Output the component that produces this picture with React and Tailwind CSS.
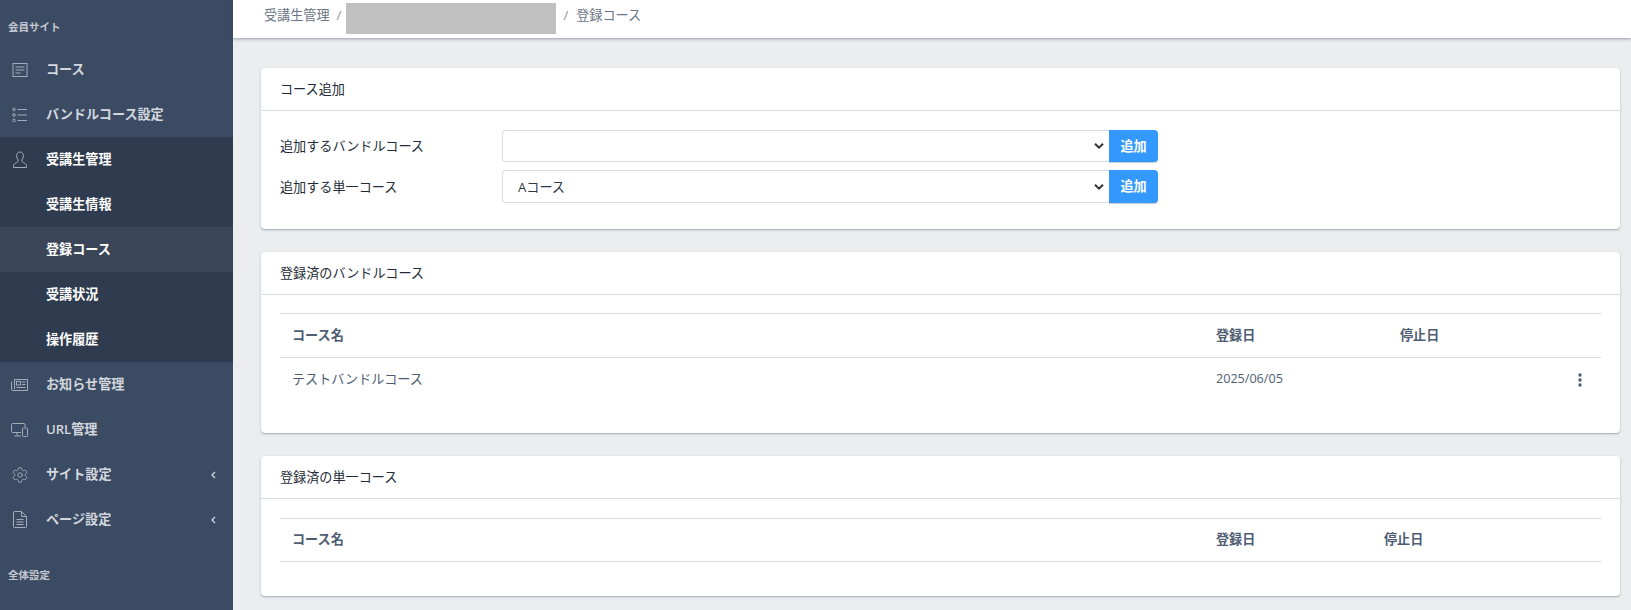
import { Settings } from 'lucide-react'

const FONT = "font-['Open_Sans','Noto_Sans_CJK_JP',sans-serif]"

const IconCourse = () => (
  <svg width="16" height="16" viewBox="0 0 16 16" fill="none" stroke="currentColor" strokeWidth="1">
    <rect x="1" y="1.500" width="14" height="13" />
    <path d="M3.500 5h9M3.500 8h9M3.500 11h5" />
  </svg>
)
const IconList = () => (
  <svg width="16" height="16" viewBox="0 0 16 16" fill="none" stroke="currentColor" strokeWidth="1">
    <circle cx="2" cy="2.500" r="1.300" />
    <circle cx="2" cy="8" r="1.300" />
    <circle cx="2" cy="13.500" r="1.300" />
    <path d="M5.500 2.500H15M5.500 8H15M5.500 13.500H15" />
  </svg>
)
const IconUser = () => (
  <svg width="16" height="18" viewBox="0 0 16 18" fill="none" stroke="currentColor" strokeWidth="1">
    <path d="M8 1c-2.200 0-3.400 1.700-3.400 3.800 0 1.700.6 3 1.400 4v1.500c0 .8-1.200 1.200-2.600 1.900C2 13 1.500 13.800 1.500 16.500h13c0-2.700-.5-3.500-1.900-4.300-1.400-.7-2.600-1.100-2.600-1.900V8.800c.8-1 1.400-2.300 1.400-4C11.400 2.700 10.200 1 8 1z" />
  </svg>
)
const IconNews = () => (
  <svg width="17" height="14" viewBox="0 0 17 14" fill="none" stroke="currentColor" strokeWidth="1">
    <path d="M3.500 1.500h13v11H2a1.500 1.500 0 0 1-1.500-1.500V3.500M3.500 1.500V11" />
    <rect x="5.500" y="3.500" width="4" height="3.500" />
    <path d="M11 4h3.500M11 6.500h3.500M5.500 9.500h9" />
  </svg>
)
const IconDevices = () => (
  <svg width="17" height="14" viewBox="0 0 17 14" fill="none" stroke="currentColor" strokeWidth="1">
    <path d="M10 9.500H1.500a1 1 0 0 1-1-1v-7a1 1 0 0 1 1-1h11.500a1 1 0 0 1 1 1V4M6 9.500v3M3.500 13h6.500" />
    <rect x="11.500" y="5" width="5" height="8.500" rx="1" />
  </svg>
)
const IconPage = () => (
  <svg width="14" height="17" viewBox="0 0 14 17" fill="none" stroke="currentColor" strokeWidth="1">
    <path d="M1.500.5h7l5 5v10a1 1 0 0 1-1 1h-11a1 1 0 0 1-1-1v-14a1 1 0 0 1 1-1zM8.500.5v5h5" />
    <path d="M3.500 8.500h7M3.500 11h7M3.500 13.500h7" />
  </svg>
)
const Chevron = () => (
  <svg className="ml-auto mr-[17px]" width="5" height="8" viewBox="0 0 5 8" fill="none" stroke="currentColor" strokeWidth="1.300">
    <path d="M4 1L1 4l3 3" />
  </svg>
)

function NavItem({ icon, label, active, bright, chevron }) {
  return (
    <div className={`flex h-[45px] items-center text-[13.125px] font-semibold ${active ? 'bg-[#3a4557]' : ''} ${bright ? 'text-white' : 'text-[#d3d7dd]'}`}>
      <span className="flex w-[46px] pl-[10px] text-[#a3acb9]">
        <span className="flex w-[19px] justify-center">{icon}</span>
      </span>
      {label}
      {chevron && <Chevron />}
    </div>
  )
}

function Sidebar() {
  return (
    <aside className="flex w-[233px] shrink-0 flex-col bg-[#3c4b64]">
      <div className="flex h-[47px] items-center pl-[8px] pt-[8px] text-[10.500px] font-bold text-[#c3c8d0]">会員サイト</div>
      <NavItem icon={<IconCourse />} label="コース" />
      <NavItem icon={<IconList />} label="バンドルコース設定" />
      <div className="bg-[#2f3b4e]">
        <NavItem icon={<IconUser />} label="受講生管理" bright />
        <NavItem label="受講生情報" bright />
        <NavItem label="登録コース" bright active />
        <NavItem label="受講状況" bright />
        <NavItem label="操作履歴" bright />
      </div>
      <NavItem icon={<IconNews />} label="お知らせ管理" />
      <NavItem icon={<IconDevices />} label="URL管理" />
      <NavItem icon={<Settings size={18} strokeWidth={1.200} />} label="サイト設定" chevron />
      <NavItem icon={<IconPage />} label="ページ設定" chevron />
      <div className="flex h-[66px] items-end pb-[24px] pl-[8px] text-[10.500px] font-bold text-[#c3c8d0]">全体設定</div>
    </aside>
  )
}

function Card({ title, children }) {
  return (
    <section className="rounded bg-white shadow-[0_1px_1px_rgba(60,75,100,0.25),0_1px_3px_rgba(60,75,100,0.2)]">
      <h2 className="flex h-[43px] items-center border-b border-[#d8dbe0] px-[19px] pt-[2px] text-[13.125px] font-normal text-[#232b38]">{title}</h2>
      {children}
    </section>
  )
}

function SelectRow({ label, value, options, height }) {
  return (
    <div className="flex items-center">
      <label className="w-[222px] pt-[2px] text-[13.125px] text-[#232b38]">{label}</label>
      <div className="relative w-[607px]">
        <select defaultValue={value} className={`${height} w-full appearance-none rounded-l border border-r-0 border-[#d8dbe0] bg-white pl-[15px] pt-[2px] text-[13.125px] text-[#2f3746]`}>
          {options.map((o) => <option key={o}>{o}</option>)}
        </select>
        <svg className="pointer-events-none absolute right-[5px] top-1/2 -translate-y-1/2" width="10" height="7" viewBox="0 0 10 7" fill="none" stroke="#333" strokeWidth="2">
          <path d="M1 1.200l4 4 4-4" />
        </svg>
      </div>
      <button type="button" className={`${height} w-[49px] rounded-r bg-[#3399ff] pt-[1px] text-[13.125px] font-semibold text-white shadow-[0_1px_1px_rgba(60,75,100,0.3)]`}>追加</button>
    </div>
  )
}

function CourseTable({ dateWidth, headHeight, rows }) {
  return (
    <table className="w-full table-fixed border-t border-[#d8dbe0] text-[13.125px]">
      <thead>
        <tr className={`${headHeight} border-b border-[#d8dbe0] text-left font-bold text-[#4f5d73]`}>
          <th className="w-[924px] pl-[12px]">コース名</th>
          <th className={`${dateWidth} pl-[12px]`}>登録日</th>
          <th className="pl-[12px]">停止日</th>
          <th className="w-[42px]" />
        </tr>
      </thead>
      <tbody>
        {rows.map((r) => (
          <tr key={r.name} className="h-[44px] text-[#4f5d73]">
            <td className="pl-[12px]">{r.name}</td>
            <td className="pl-[12px] text-[12.600px]">{r.date}</td>
            <td />
            <td>
              <svg className="ml-[19px]" width="4" height="14" viewBox="0 0 4 14" fill="#4f5d73">
                <circle cx="2" cy="2" r="1.700" />
                <circle cx="2" cy="7" r="1.700" />
                <circle cx="2" cy="12" r="1.700" />
              </svg>
            </td>
          </tr>
        ))}
      </tbody>
    </table>
  )
}

export default function App() {
  return (
    <div className={`flex h-[610px] overflow-hidden bg-[#ebedef] ${FONT}`}>
      <Sidebar />
      <div className="flex min-w-0 flex-1 flex-col">
        <header className="flex h-[38px] shrink-0 items-center bg-white pb-[6px] pl-[31px] text-[13.125px] text-[#6c7686] shadow-[0_1px_3px_rgba(60,75,100,0.5)]">
          <span>受講生管理</span>
          <span className="ml-[7px] text-[#8a93a2]">/</span>
          <span className="ml-[5px] mt-[4px] h-[31px] w-[210px] bg-[#c0c0c0]" />
          <span className="ml-[7px] text-[#8a93a2]">/</span>
          <span className="ml-[8px]">登録コース</span>
        </header>
        <main className="flex flex-col gap-[23px] pb-[15px] pl-[28px] pr-[11px] pt-[30px]">
          <Card title="コース追加">
            <div className="flex h-[118px] flex-col gap-[8px] px-[19px] pt-[19px]">
              <SelectRow label="追加するバンドルコース" value="" options={['', 'テストバンドルコース']} height="h-[32px]" />
              <SelectRow label="追加する単一コース" value="Aコース" options={['Aコース']} height="h-[33px]" />
            </div>
          </Card>
          <Card title="登録済のバンドルコース">
            <div className="h-[138px] px-[19px] pt-[18px]">
              <CourseTable dateWidth="w-[184px]" headHeight="h-[44px]" rows={[{ name: 'テストバンドルコース', date: '2025/06/05' }]} />
            </div>
          </Card>
          <Card title="登録済の単一コース">
            <div className="h-[97px] px-[19px] pt-[19px]">
              <CourseTable dateWidth="w-[168px]" headHeight="h-[43px]" rows={[]} />
            </div>
          </Card>
        </main>
      </div>
    </div>
  )
}
